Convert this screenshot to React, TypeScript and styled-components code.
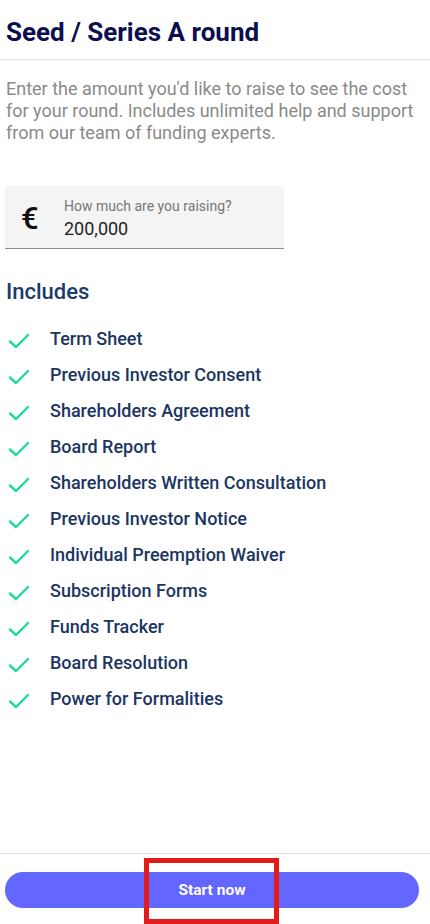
import styled, { createGlobalStyle } from "styled-components";

const GlobalStyle = createGlobalStyle`
  * { box-sizing: border-box; }
  html, body { margin: 0; padding: 0; background: #fff; }
  body { font-family: Roboto, "Liberation Sans", Arial, sans-serif; }
`;

const Page = styled.div`
  min-height: 100vh;
  display: flex;
  flex-direction: column;
`;

const Header = styled.header`
  padding: 16px 6px 11px;
  border-bottom: 1px solid #e0e0e0;
`;

const Title = styled.h1`
  margin: 0;
  font-size: 26px;
  line-height: 32px;
  font-weight: 700;
  color: #0b0e4f;
`;

const Main = styled.main`
  flex: 1;
  padding: 18px 6px 0;
`;

const Intro = styled.p`
  margin: 0;
  font-size: 18px;
  line-height: 22px;
  color: #8a8a8a;
`;

const Field = styled.div`
  margin-top: 42px;
  width: 279px;
  height: 63px;
  margin-left: -1px;
  background: #f4f4f4;
  border-bottom: 1px solid #8c8c8c;
  border-radius: 4px 4px 0 0;
  display: flex;
  align-items: center;
`;

const Currency = styled.span`
  width: 59px;
  padding-left: 16px;
  padding-top: 3px;
  font-size: 31px;
  font-weight: 500;
  color: #111;
`;

const FieldBody = styled.div`
  display: flex;
  flex-direction: column;
  padding-top: 2px;
`;

const Label = styled.label`
  font-size: 14px;
  line-height: 16px;
  color: #777;
`;

const Value = styled.span`
  margin-top: 5px;
  font-size: 18px;
  line-height: 20px;
  color: #1e1e1e;
`;

const SectionTitle = styled.h2`
  margin: 30px 0 15px;
  font-size: 22px;
  line-height: 26px;
  font-weight: 500;
  color: #1c3a6c;
`;

const List = styled.ul`
  list-style: none;
  margin: 0;
  padding: 0;
`;

const Item = styled.li`
  display: flex;
  align-items: center;
  height: 36px;
  font-size: 18px;
  font-weight: 500;
  color: #1c3561;
`;

const Check = styled.svg`
  width: 22px;
  height: 16px;
  margin: 5px 20px 0 2px;
  flex-shrink: 0;
`;

const Footer = styled.footer`
  border-top: 1px solid #e0e0e0;
  padding: 18px 11px 16px 5px;
`;

const ButtonWrap = styled.div`
  position: relative;
`;

const StartButton = styled.button`
  width: 100%;
  height: 36px;
  border: none;
  border-radius: 18px;
  background: #6366ff;
  color: #fff;
  font-family: inherit;
  font-size: 15.5px;
  font-weight: 700;
  cursor: pointer;
`;

const Highlight = styled.div`
  position: absolute;
  left: 139px;
  top: -14px;
  width: 135px;
  height: 66px;
  border: 5px solid #e31b1b;
  pointer-events: none;
`;

const items = [
  "Term Sheet",
  "Previous Investor Consent",
  "Shareholders Agreement",
  "Board Report",
  "Shareholders Written Consultation",
  "Previous Investor Notice",
  "Individual Preemption Waiver",
  "Subscription Forms",
  "Funds Tracker",
  "Board Resolution",
  "Power for Formalities",
];

function App() {
  return (
    <Page>
      <GlobalStyle />
      <Header>
        <Title>Seed / Series A round</Title>
      </Header>
      <Main>
        <Intro>
          Enter the amount you'd like to raise to see the cost for your round.
          Includes unlimited help and support from our team of funding experts.
        </Intro>
        <Field>
          <Currency>€</Currency>
          <FieldBody>
            <Label>How much are you raising?</Label>
            <Value>200,000</Value>
          </FieldBody>
        </Field>
        <SectionTitle>Includes</SectionTitle>
        <List>
          {items.map((item) => (
            <Item key={item}>
              <Check viewBox="0 0 22 16">
                <path
                  d="M2 8.5 L8 14 L20 2"
                  fill="none"
                  stroke="#1ddc9b"
                  strokeWidth="2.4"
                  strokeLinecap="round"
                  strokeLinejoin="round"
                />
              </Check>
              {item}
            </Item>
          ))}
        </List>
      </Main>
      <Footer>
        <ButtonWrap>
          <StartButton>Start now</StartButton>
          <Highlight />
        </ButtonWrap>
      </Footer>
    </Page>
  );
}

export default App;
